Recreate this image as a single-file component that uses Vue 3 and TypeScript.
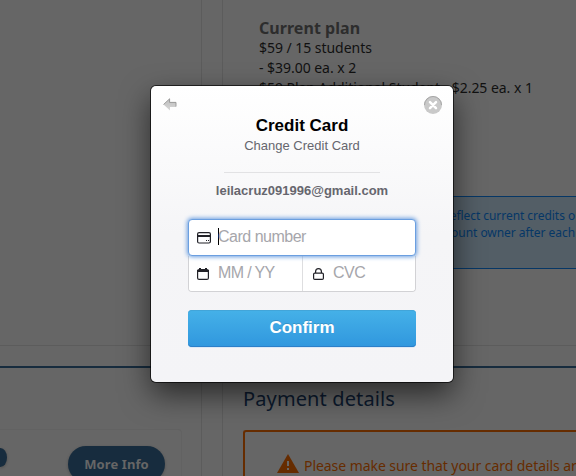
<script setup lang="ts">
import { ref } from 'vue'

const planLines: string[] = [
  '$59 / 15 students',
  '- $39.00 ea. x 2',
  '$59 Plan Additional Student - $2.25 ea. x 1',
]
const email = ref('leilacruz091996@gmail.com')
const cardNumber = ref('')
const expiry = ref('')
const cvc = ref('')
</script>

<template>
  <div class="page">
    <main class="board">
      <section class="panel panel-top panel-left"></section>
      <section class="panel panel-top panel-right">
        <div class="plan">
          <h3>Current plan</h3>
          <p v-for="line in planLines" :key="line">{{ line }}</p>
        </div>
        <div class="notice">
          <p>reflect current credits o</p>
          <p class="second">account owner after each</p>
        </div>
      </section>
      <section class="panel panel-bottom panel-left">
        <div class="offer">
          <span class="pill pill-cut"></span>
          <button class="pill">More Info</button>
        </div>
      </section>
      <section class="panel panel-bottom panel-right">
        <h2>Payment details</h2>
        <div class="warning">
          <svg width="22" height="19" viewBox="0 0 22 19">
            <path class="tri" d="M11 0 22 19H0Z" />
            <path class="mark" d="M10 7h2v5h-2zM10 14h2v2h-2z" />
          </svg>
          <span>Please make sure that your card details ar</span>
        </div>
      </section>
    </main>

    <div class="overlay">
      <form class="modal" @submit.prevent>
        <header>
          <svg class="back" width="14" height="13" viewBox="0 0 14 13">
            <defs>
              <linearGradient id="arrowFill" x1="0" y1="0" x2="0" y2="1">
                <stop offset="0" stop-color="#bcbcbc" />
                <stop offset="1" stop-color="#d8d8d8" />
              </linearGradient>
            </defs>
            <path d="M.5 6.500 7 .5V4h6v5H7v3.500Z" fill="url(#arrowFill)" />
            <path d="M.5 6.500 6.600.8V4.400H13V8.500" fill="none" stroke="#969696" stroke-width=".9" />
          </svg>
          <svg class="close" width="18" height="18" viewBox="0 0 18 18">
            <circle cx="9" cy="9" r="9" fill="#c9c9c9" />
            <path d="M.5 9a8.500 8.500 0 0 1 17 0" fill="none" stroke="#a5a5a5" />
            <path d="M6 6.200l6 6M12 6.200l-6 6" stroke="#fff" stroke-width="2.500" stroke-linecap="round" />
          </svg>
        </header>
        <h1>Credit Card</h1>
        <p class="subtitle">Change Credit Card</p>
        <hr />
        <p class="email">{{ email }}</p>
        <div class="fields">
          <label class="field number">
            <svg width="14" height="12" viewBox="0 0 14 12">
              <rect x=".6" y=".6" width="12.800" height="10.400" rx="1.500" />
              <path class="solid" d="M0 3h14v2H0zM9 8h1v1H9zM11 8h1v1h-1z" />
            </svg>
            <i class="caret"></i>
            <input v-model="cardNumber" placeholder="Card number" />
          </label>
          <div class="split">
            <label class="field expiry">
              <svg width="12" height="12" viewBox="0 0 12 12">
                <rect x=".6" y="1.600" width="10.800" height="9.800" rx="1.500" />
                <path class="solid" d="M0 2h12v2H0zM2 0h2v3H2zM8 0h2v3H8z" />
              </svg>
              <input v-model="expiry" placeholder="MM / YY" />
            </label>
            <label class="field cvc">
              <svg width="11" height="12" viewBox="0 0 11 12">
                <rect x=".6" y="5.100" width="9.800" height="6.300" rx="1.200" />
                <path d="M2.600 5V3.600a2.900 2.900 0 0 1 5.800 0V5" />
              </svg>
              <input v-model="cvc" placeholder="CVC" />
            </label>
          </div>
        </div>
        <button class="confirm" type="submit">Confirm</button>
      </form>
    </div>
  </div>
</template>

<style>
body {
  margin: 0;
  overflow: hidden;
}
</style>

<style scoped>
* {
  box-sizing: border-box;
}
h1, h2, h3, p {
  margin: 0;
}
.page {
  position: relative;
  width: 576px;
  height: 476px;
  overflow: hidden;
  background: #666;
  font-family: "Noto Sans", "Open Sans", sans-serif;
}
.board {
  display: grid;
  grid-template-columns: 202px 354px;
  grid-template-rows: 346px 110px;
  gap: 20px;
}
.panel {
  min-width: 0;
  white-space: nowrap;
}
.panel-left {
  border-right: 1px solid #5c5c5c;
}
.panel-right {
  border-left: 1px solid #5c5c5c;
}
.panel-top {
  border-bottom: 1px solid #5c5c5c;
}
.panel-bottom {
  border-top: 2px solid #172c3e;
}
.plan {
  padding: 18px 0 0 36px;
  color: #111;
  font-size: 14px;
  line-height: 20px;
  letter-spacing: -0.04px;
}
.plan h3 {
  color: #2d2d2d;
  font-size: 16px;
  line-height: 20px;
  letter-spacing: 0.05px;
}
.notice {
  margin: 98px -10px 0 20px;
  height: 73px;
  padding: 10px 0 0 201px;
  border: 1px solid #063766;
  background: #535e66;
  color: #063766;
  font-size: 12px;
  line-height: 17px;
  letter-spacing: -0.05px;
}
.notice .second {
  margin-left: -12px;
}
.offer {
  display: flex;
  align-items: flex-start;
  justify-content: space-between;
  width: 182px;
  height: 60px;
  margin-top: 61px;
  padding: 16px 16px 0 0;
  border: 1px solid #626262;
  border-left: 0;
  border-radius: 0 4px 0 0;
}
.pill {
  width: 97px;
  height: 36px;
  padding: 0;
  border: 0;
  border-radius: 18px;
  background: #172c3e;
  box-shadow: 0 1px 3px rgba(0, 0, 0, 0.25);
  color: #666;
  font: bold 13px "Noto Sans", sans-serif;
  letter-spacing: 0.1px;
}
.pill-cut {
  width: 7px;
  height: 19px;
  margin-top: 2px;
  border-radius: 0 7px 7px 0 / 0 10px 10px 0;
}
h2 {
  padding: 16px 0 0 20px;
  color: #0c1a2e;
  font-size: 20px;
  font-weight: 400;
  line-height: 30px;
  letter-spacing: 0.12px;
}
.warning {
  display: flex;
  align-items: flex-start;
  gap: 5px;
  height: 80px;
  margin: 16px 0 0 20px;
  padding: 22px 0 0 32px;
  border: 2px solid #662c00;
  border-right: 0;
  border-radius: 3px 0 0 0;
  color: #662c00;
  font-size: 14px;
  line-height: 24px;
  letter-spacing: -0.06px;
}
.warning svg {
  flex: none;
}
.tri {
  fill: #662c00;
}
.mark {
  fill: #666;
}
.overlay {
  position: absolute;
  inset: 0;
  display: flex;
  align-items: flex-start;
  padding: 86px 0 0 151px;
}
.modal {
  width: 302px;
  height: 296px;
  padding: 0 37px;
  border-radius: 5px;
  background: linear-gradient(#fff, #f5f5f7 50%, #f4f4f7);
  box-shadow: 0 0 0 1px rgba(0, 0, 0, 0.65), 0 12px 30px rgba(0, 0, 0, 0.6);
  font-family: "Liberation Sans", Arial, sans-serif;
  text-align: center;
}
header {
  display: flex;
  justify-content: space-between;
  height: 30px;
  margin: 0 -26px 0 -25px;
  padding-top: 10px;
}
.back {
  margin-top: 2px;
}
h1 {
  color: #000;
  font-size: 17px;
  line-height: 20px;
}
.subtitle {
  color: #66666e;
  font-size: 13px;
  line-height: 20px;
}
hr {
  width: 156px;
  height: 1px;
  margin: 16px auto 9px;
  border: 0;
  background: #e2e2e4;
}
.email {
  color: #66666e;
  font-size: 13px;
  font-weight: 700;
  line-height: 18px;
}
.fields {
  margin-top: 19px;
}
.field {
  display: flex;
  align-items: center;
  flex: 1;
  min-width: 0;
  padding-left: 9px;
  background: #fff;
}
.field svg {
  flex: none;
  fill: none;
  stroke: #222228;
  stroke-width: 1.2;
}
.field svg .solid {
  fill: #222228;
  stroke: none;
}
input {
  width: 0;
  flex: 1;
  margin: 0 0 2px 9px;
  padding: 0;
  border: 0;
  outline: 0;
  background: none;
  color: #222;
  font: 16px "Liberation Sans", Arial, sans-serif;
  letter-spacing: -0.5px;
}
input::placeholder {
  color: #a6a6ab;
  opacity: 1;
}
.expiry input {
  letter-spacing: -0.65px;
}
.number {
  position: relative;
  height: 37px;
  padding-left: 8px;
  border: 1px solid #6b9fe0;
  border-radius: 4px;
  box-shadow: 0 0 4px 1px #6b9fe0;
}
.caret {
  width: 1px;
  height: 17px;
  margin: -2px 0 0 7px;
  background: #000;
}
.number .caret + input {
  margin-left: -1px;
}
.split {
  display: flex;
  height: 36px;
  border: 1px solid #d2d2d5;
  border-top: 0;
  border-radius: 0 0 4px 4px;
  overflow: hidden;
}
.split .field {
  flex: 0 0 113px;
  padding-left: 8px;
}
.split .cvc {
  border-left: 1px solid #dedee0;
  padding-left: 10px;
}
.confirm {
  display: block;
  width: 228px;
  height: 37px;
  margin-top: 18px;
  padding: 0 0 1px;
  border: 0;
  border-radius: 4px;
  background: linear-gradient(#45b1e8, #3097de);
  box-shadow: inset 0 -1px #2b7fc9, inset 0 1px #42a5d9, 0 1px #dce8f5;
  color: #fff;
  font: bold 17px "Liberation Sans", Arial, sans-serif;
  text-shadow: 0 -1px rgba(0, 0, 0, 0.15);
}
</style>
